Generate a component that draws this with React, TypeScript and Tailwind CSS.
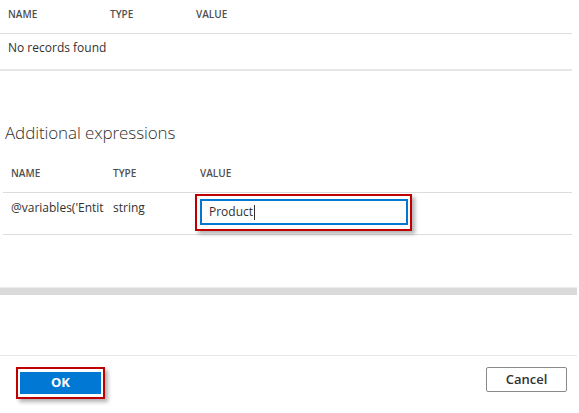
import React from "react";

const font = { fontFamily: '"Segoe UI", "Open Sans", "Noto Sans", sans-serif' };

export default function App() {
  return (
    <div className="w-[579px] h-[413px] bg-white text-[#323130] overflow-hidden" style={font}>
      <div className="w-[572px]">
        {/* top table */}
        <div className="grid grid-cols-[102px_86px_1fr] pl-2 h-[34px] items-start pt-[8px] leading-[12px] border-b border-[#dcdcdc] text-[10px] font-semibold text-[#505050]">
          <div>NAME</div>
          <div>TYPE</div>
          <div>VALUE</div>
        </div>
        <div className="pl-2 h-[37px] pt-[6px] leading-[16px] border-b-2 border-[#e6e6e6] text-[12px] text-[#323130]">
          No records found
        </div>

        {/* additional expressions */}
        <div className="pl-[3px]">
          <div className="pl-[2px] pt-[50px] text-[17px] font-light text-[#323130] leading-[24px] tracking-[-0.1px]">
            Additional expressions
          </div>
          <div className="grid grid-cols-[102px_87px_1fr] pl-2 h-[35px] pt-[9px] leading-[12px] items-start border-b border-[#dcdcdc] text-[10px] font-semibold text-[#505050] mt-[13px]">
            <div>NAME</div>
            <div>TYPE</div>
            <div>VALUE</div>
          </div>
          <div className="grid grid-cols-[102px_87px_1fr] pl-2 h-[42px] border-b border-[#dcdcdc] text-[12px] leading-[16px] text-[#323130]">
            <div className="pt-[7px] whitespace-nowrap overflow-hidden">@variables('Entit</div>
            <div className="pt-[7px]">string</div>
            <div className="pt-[1px]">
              <div className="-ml-[5px] w-[217px] h-[37px] border-2 border-[#c00000] pt-[3px] pl-[3px] shadow-[3px_3px_4px_rgba(0,0,0,0.3)] bg-white">
                <div className="w-[208px] h-[26px] border-2 border-[#0078d4] flex items-center pl-[7px] text-[12px] text-[#323130]">
                  Product<span className="inline-block w-px h-[15px] bg-[#323130] ml-px" />
                </div>
              </div>
            </div>
          </div>
        </div>
      </div>

      {/* gray splitter bar */}
      <div className="mt-[52px] w-[577px] h-[8px] bg-[#dadada] border-t border-[#ececec]" />

      {/* footer */}
      <div className="mt-[60px] w-[577px] border-t border-[#e6e6e6] flex items-start justify-between pt-[11px]">
        <div className="ml-[16px] w-[89px] h-[32px] border-2 border-[#c00000] p-[3px] pl-[2px] shadow-[3px_3px_4px_rgba(0,0,0,0.3)] bg-white">
          <div className="w-[81px] h-[22px] bg-[#0078d4] flex items-center justify-center text-white text-[13px] font-bold">
            OK
          </div>
        </div>
        <div className="mr-[10px] w-[81px] h-[25px] border border-[#8a8a8a] rounded-[2px] flex items-center justify-center text-[13px] font-semibold text-[#323130]">
          Cancel
        </div>
      </div>
    </div>
  );
}
